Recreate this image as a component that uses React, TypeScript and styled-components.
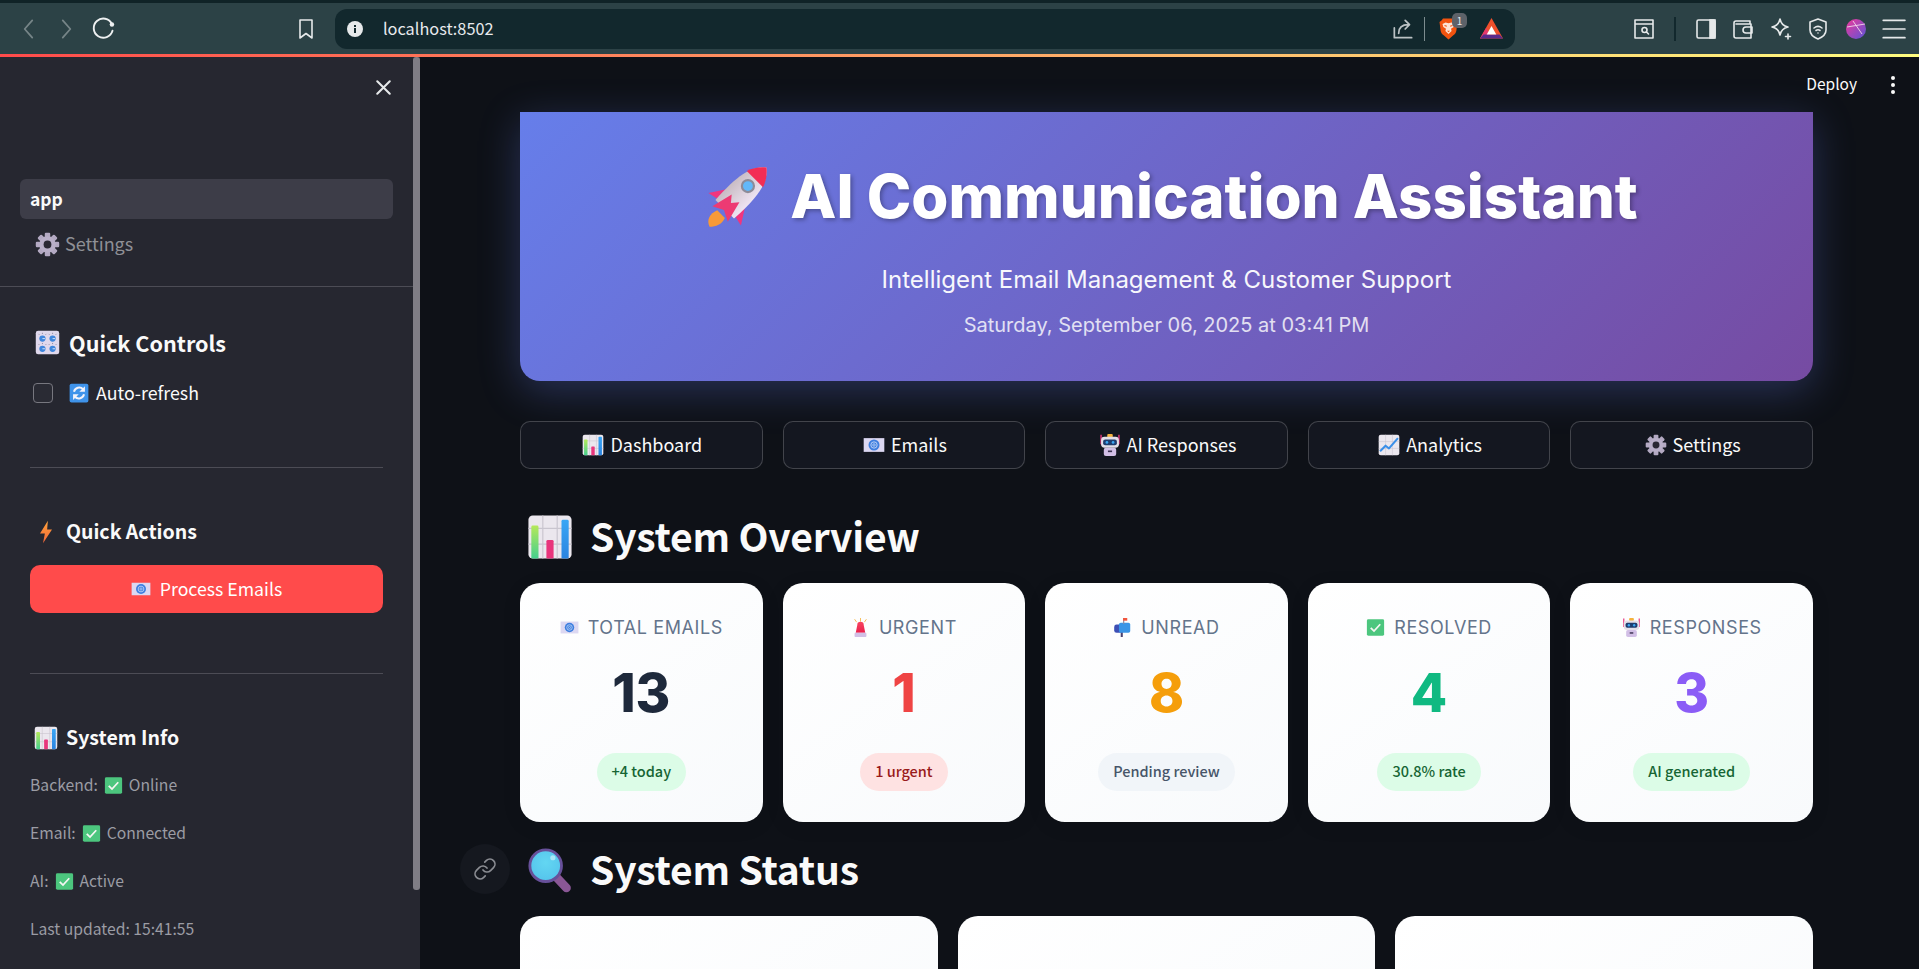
import styled, { createGlobalStyle } from 'styled-components';

const SOURCE = `"Noto Sans CJK SC", "Noto Sans", sans-serif`;
const INTER = `Inter, "Liberation Sans", sans-serif`;

const GlobalStyle = createGlobalStyle`
  html, body {
    margin: 0;
    padding: 0;
    height: 100%;
    overflow: hidden;
    background: #0e1117;
  }
  * { box-sizing: border-box; }
`;

type IconProps = { size?: number };

const ChartEmoji = ({ size = 24 }: IconProps) => (
  <svg width={size} height={size} viewBox="0 0 32 32">
    <defs>
      <linearGradient id="barGreen" x1="0" y1="0" x2="0" y2="1">
        <stop offset="0" stopColor="#b5e85a" />
        <stop offset="1" stopColor="#45cf8e" />
      </linearGradient>
      <linearGradient id="barBlue" x1="0" y1="0" x2="0" y2="1">
        <stop offset="0" stopColor="#3aa6f5" />
        <stop offset="1" stopColor="#2b84e0" />
      </linearGradient>
    </defs>
    <rect x="1" y="1" width="30" height="30" rx="3" fill="#ebe7ee" />
    <path d="M1 10h30M1 21h30M11 1v30M21 1v30" stroke="#c9c5cf" strokeWidth="0.8" />
    <rect x="3" y="8" width="5" height="23" rx="1" fill="url(#barGreen)" />
    <rect x="13.5" y="18" width="5" height="13" rx="1" fill="#e8357c" />
    <rect x="24" y="4" width="5" height="27" rx="1" fill="url(#barBlue)" />
  </svg>
);

const EmailEmoji = ({ size = 24 }: IconProps) => (
  <svg width={size} height={size} viewBox="0 0 32 32">
    <rect x="1" y="6" width="30" height="20" fill="#dcd8f2" />
    <circle cx="16" cy="16" r="8" fill="#3f7fdf" />
    <circle cx="16" cy="16" r="4.6" fill="none" stroke="#c6d8f7" strokeWidth="1.3" />
    <circle cx="16" cy="16" r="1.8" fill="none" stroke="#c6d8f7" strokeWidth="1.1" />
  </svg>
);

const RobotEmoji = ({ size = 24 }: IconProps) => (
  <svg width={size} height={size} viewBox="0 0 32 32">
    <path d="M3 1v14M29 1v14" stroke="#e8357c" strokeWidth="2" />
    <rect x="12" y="0" width="8" height="5" rx="1.5" fill="#f5b23d" />
    <rect x="3" y="4" width="26" height="16" rx="5" fill="#e4dee8" />
    <rect x="6" y="8" width="20" height="8.5" rx="3" fill="#1e3c6e" />
    <circle cx="11.5" cy="12.2" r="2" fill="#3ea6f2" />
    <circle cx="20.5" cy="12.2" r="2" fill="#3ea6f2" />
    <rect x="7" y="20" width="18" height="12" rx="3" fill="#d2bfe6" />
    <rect x="13" y="24" width="6" height="2.4" fill="#3a3050" />
  </svg>
);

const TrendEmoji = ({ size = 24 }: IconProps) => (
  <svg width={size} height={size} viewBox="0 0 32 32">
    <rect x="1" y="1" width="30" height="30" rx="3" fill="#ebe7ee" />
    <path d="M1 11h30M1 21h30M11 1v30M21 1v30" stroke="#c9c5cf" strokeWidth="0.8" />
    <path d="M3 25l8-8 5 4L29 6" fill="none" stroke="#3a8fe8" strokeWidth="3" strokeLinejoin="round" />
  </svg>
);

const GearEmoji = ({ size = 24 }: IconProps) => (
  <svg width={size} height={size} viewBox="0 0 32 32">
    {[0, 45, 90, 135, 180, 225, 270, 315].map((angle) => (
      <rect key={angle} x="12.5" y="1" width="7" height="8" rx="1.5" fill="#b3a9c2" transform={`rotate(${angle} 16 16)`} />
    ))}
    <circle cx="16" cy="16" r="10.5" fill="#b9afc8" />
    <circle cx="16" cy="16" r="5" fill="#2a2833" />
  </svg>
);

const KnobsEmoji = ({ size = 24 }: IconProps) => (
  <svg width={size} height={size} viewBox="0 0 32 32">
    <rect x="1" y="1" width="30" height="30" rx="3" fill="#dfd8ec" />
    {[
      [9.5, 11],
      [22.5, 11],
      [9.5, 24],
      [22.5, 24],
    ].map(([cx, cy]) => (
      <g key={`${cx}-${cy}`}>
        <circle cx={cx} cy={cy} r="4" fill="#3f86dc" />
        <path d={`M${cx} ${cy}h3.2`} stroke="#d9e8fa" strokeWidth="1.2" />
        <path d={`M${cx - 5} ${cy - 6}l1 1M${cx} ${cy - 7.4}v1.4M${cx + 5} ${cy - 6}l-1 1`} stroke="#6f6b88" strokeWidth="0.9" />
      </g>
    ))}
  </svg>
);

const RefreshEmoji = ({ size = 24 }: IconProps) => (
  <svg width={size} height={size} viewBox="0 0 32 32">
    <rect x="1" y="1" width="30" height="30" rx="3" fill="#3f93ea" />
    <path d="M8 14a8.5 8.5 0 0 1 14.5-4" fill="none" stroke="#f2f2fa" strokeWidth="3.2" />
    <path d="M25.5 5v9h-9z" fill="#f2f2fa" />
    <path d="M24 18a8.5 8.5 0 0 1-14.5 4" fill="none" stroke="#f2f2fa" strokeWidth="3.2" />
    <path d="M6.5 27v-9h9z" fill="#f2f2fa" />
  </svg>
);

const BoltEmoji = ({ size = 24 }: IconProps) => (
  <svg width={size} height={size} viewBox="0 0 32 32">
    <defs>
      <linearGradient id="boltFill" x1="0" y1="0" x2="0" y2="1">
        <stop offset="0" stopColor="#ffa43a" />
        <stop offset="1" stopColor="#f2653a" />
      </linearGradient>
    </defs>
    <path d="M18.5 1L8 18h6.5L12 31l12-18.5h-6.5z" fill="url(#boltFill)" />
  </svg>
);

const CheckEmoji = ({ size = 24 }: IconProps) => (
  <svg width={size} height={size} viewBox="0 0 32 32">
    <rect x="1.5" y="2" width="29" height="28" rx="2.5" fill="#4cc67e" />
    <path d="M8 16.5l5.5 5.5L24 10.5" fill="none" stroke="#f4f6f2" strokeWidth="3" />
  </svg>
);

const SirenEmoji = ({ size = 24 }: IconProps) => (
  <svg width={size} height={size} viewBox="0 0 32 32">
    <defs>
      <linearGradient id="sirenFill" x1="0" y1="0" x2="0" y2="1">
        <stop offset="0" stopColor="#f8455f" />
        <stop offset="1" stopColor="#ea1f4c" />
      </linearGradient>
    </defs>
    <path d="M16 0v6M6 2l3.5 5M26 2l-3.5 5" stroke="#f5b23d" strokeWidth="1.4" />
    <path d="M8 25l2.5-13a5.5 5.5 0 0 1 11 0L24 25z" fill="url(#sirenFill)" />
    <rect x="6" y="25" width="20" height="7" rx="1.5" fill="#d2bfe6" />
  </svg>
);

const MailboxEmoji = ({ size = 24 }: IconProps) => (
  <svg width={size} height={size} viewBox="0 0 32 32">
    <rect x="13" y="20" width="3.5" height="12" fill="#4b4270" />
    <rect x="2" y="11" width="14" height="14" rx="4" fill="#3d4fb5" />
    <rect x="10" y="8" width="19" height="17" rx="3" fill="#3a95e6" />
    <rect x="17" y="0" width="2" height="10" fill="#8a8aa0" />
    <rect x="17" y="0" width="7" height="4.5" fill="#f2553d" />
  </svg>
);

const MagnifierEmoji = ({ size = 24 }: IconProps) => (
  <svg width={size} height={size} viewBox="0 0 32 32">
    <defs>
      <radialGradient id="lensFill" cx="0.5" cy="0.4" r="0.6">
        <stop offset="0" stopColor="#63d6f2" />
        <stop offset="1" stopColor="#55c4ec" />
      </radialGradient>
    </defs>
    <path d="M20 20.5L27.5 28.5" stroke="#8a5796" strokeWidth="6" strokeLinecap="round" />
    <circle cx="13" cy="13" r="11" fill="url(#lensFill)" stroke="#67509a" strokeWidth="2" />
    <circle cx="18" cy="7.5" r="1.8" fill="#a9e6f7" />
  </svg>
);

const RocketEmoji = ({ size = 24 }: IconProps) => (
  <svg width={size} height={size} viewBox="0 0 64 64">
    <defs>
      <linearGradient id="rocketBody" x1="0" y1="0" x2="1" y2="0">
        <stop offset="0" stopColor="#c9bcc4" />
        <stop offset="1" stopColor="#eee4f2" />
      </linearGradient>
    </defs>
    <path d="M6 60c-3-6 0-12 7-15l7 7c-3 6-8 8-14 8z" fill="#f79a38" />
    <g transform="rotate(45 34 30)">
      <path d="M22 36l-9 14 9-2zM46 36l9 14-9-2z" fill="#f0357e" />
      <path d="M34 -4c10 8 14 22 12 54H22C20 18 24 4 34 -4z" fill="url(#rocketBody)" />
      <path d="M34 -4c5 4 8.5 9 10.5 15h-21C25.5 5 29 0 34 -4z" fill="#f32d55" />
      <circle cx="34" cy="20" r="6.5" fill="#8d8b98" />
      <circle cx="34" cy="20" r="4.5" fill="#62b8fa" />
      <path d="M29 36l-5 20 10-5 10 5-5-20-5 6z" fill="#ed3a73" />
    </g>
  </svg>
);

const StrokeIcon = ({ size = 24, d, opacity = 1, weight = 1.6 }: IconProps & { d: string; opacity?: number; weight?: number }) => (
  <svg width={size} height={size} viewBox="0 0 24 24" fill="none" stroke="#e6e9ea" strokeWidth={weight} strokeLinecap="round" strokeLinejoin="round" opacity={opacity}>
    <path d={d} />
  </svg>
);

const ReloadIcon = () => (
  <svg width="27" height="27" viewBox="0 0 24 24" fill="none" stroke="#eef0f1" strokeWidth="1.7" strokeLinecap="round">
    <path d="M19.5 8A8.5 8.5 0 1 0 20 14" />
    <circle cx="19.5" cy="8.5" r="2" fill="#eef0f1" stroke="none" />
  </svg>
);

const SidePanelIcon = () => (
  <svg width="24" height="24" viewBox="0 0 24 24" fill="none" stroke="#e6e9ea" strokeWidth="1.6">
    <rect x="3" y="3" width="18" height="18" rx="1.5" />
    <rect x="16" y="3" width="5" height="18" fill="#e6e9ea" />
  </svg>
);

const InfoIcon = () => (
  <svg width="18" height="18" viewBox="0 0 18 18">
    <circle cx="9" cy="9" r="8" fill="#e6e9ea" />
    <rect x="8" y="8" width="2" height="5" fill="#12282d" />
    <rect x="8" y="5" width="2" height="2" fill="#12282d" />
  </svg>
);

const BraveIcon = () => (
  <svg width="19" height="22" viewBox="0 0 19 22">
    <path d="M4 0.5h11l1.500 2 2 1.500-1.200 9c-.3 2-1.500 3.200-3 4.300L9.500 21.500l-4.800-4.200c-1.500-1.100-2.700-2.300-3-4.300L.5 4l2-1.500z" fill="#f1530f" />
    <path d="M3.500 6l3-1.500 3 .8 3-.8 3 1.500-.8 3-2.700 1.800.6 2.200-3.100 3-3.100-3 .6-2.200-2.700-1.800z" fill="#fde3d4" />
    <path d="M5.500 7.500l2.300.8M13.500 7.500l-2.300.8" stroke="#f1530f" strokeWidth="1.200" />
    <path d="M8 12.800h3l-1.500 1.400z" fill="#f1530f" />
  </svg>
);

const BatIcon = () => (
  <svg width="23" height="21" viewBox="0 0 23 21">
    <path d="M11.5 0L23 20.500H0z" fill="#f0502c" />
    <path d="M0 20.500L6 10l5 8.500z" fill="#e5386e" />
    <path d="M0 20.500h23l-3.500-4H3.500z" fill="#5a2a8c" />
    <path d="M11.500 8l4.800 8.500H6.700z" fill="#fff" />
  </svg>
);

const ProfileBall = () => (
  <svg width="22" height="22" viewBox="0 0 22 22">
    <defs>
      <linearGradient id="ballFill" x1="0" y1="0" x2="1" y2="1">
        <stop offset="0" stopColor="#f0389a" />
        <stop offset="1" stopColor="#5a55d8" />
      </linearGradient>
    </defs>
    <circle cx="11" cy="11" r="10" fill="url(#ballFill)" />
    <path d="M2 9l18-3M8 3l9 13" stroke="#f3d7ea" strokeWidth="0.9" fill="none" />
  </svg>
);

const LinkIcon = () => (
  <svg width="24" height="24" viewBox="0 0 24 24" fill="none" stroke="#8a8c92" strokeWidth="1.7" strokeLinecap="round" strokeLinejoin="round">
    <path d="M10 13a5 5 0 0 0 7.54.54l3-3a5 5 0 0 0-7.07-7.07l-1.72 1.71" />
    <path d="M14 11a5 5 0 0 0-7.54-.54l-3 3a5 5 0 0 0 7.07 7.07l1.71-1.71" />
  </svg>
);

const navItems = [
  { label: 'Dashboard', icon: <ChartEmoji size={22} /> },
  { label: 'Emails', icon: <EmailEmoji size={22} /> },
  { label: 'AI Responses', icon: <RobotEmoji size={22} /> },
  { label: 'Analytics', icon: <TrendEmoji size={22} /> },
  { label: 'Settings', icon: <GearEmoji size={22} /> },
];

const stats = [
  { label: 'Total Emails', icon: <EmailEmoji size={19} />, value: '13', color: '#1e293b', chip: '+4 today', tone: 'green' },
  { label: 'Urgent', icon: <SirenEmoji size={19} />, value: '1', color: '#ef4444', chip: '1 urgent', tone: 'red' },
  { label: 'Unread', icon: <MailboxEmoji size={19} />, value: '8', color: '#f59e0b', chip: 'Pending review', tone: 'gray' },
  { label: 'Resolved', icon: <CheckEmoji size={19} />, value: '4', color: '#10b981', chip: '30.8% rate', tone: 'green' },
  { label: 'Responses', icon: <RobotEmoji size={19} />, value: '3', color: '#8b5cf6', chip: 'AI generated', tone: 'green' },
];

const chipTones: Record<string, { bg: string; fg: string }> = {
  green: { bg: '#dcfce7', fg: '#166534' },
  red: { bg: '#fee2e2', fg: '#991b1b' },
  gray: { bg: '#f1f5f9', fg: '#475569' },
};

export default function App() {
  return (
    <Page>
      <GlobalStyle />
      <BrowserBar>
        <ToolButton><StrokeIcon size={26} d="M15 4l-7 8 7 8" opacity={0.4} /></ToolButton>
        <ToolButton><StrokeIcon size={26} d="M9 4l7 8-7 8" opacity={0.4} /></ToolButton>
        <ToolButton><ReloadIcon /></ToolButton>
        <BookmarkSlot><StrokeIcon size={24} d="M6 3h12v18l-6-4.5L6 21z" /></BookmarkSlot>
        <UrlBar>
          <InfoIcon />
          <UrlText>localhost:8502</UrlText>
          <UrlRight>
            <StrokeIcon size={26} d="M4 11v9h16M8 16c0-5 3-8 9-8M14 4l4 4-4 4" opacity={0.8} />
            <ThinSep />
            <BraveSlot>
              <BraveIcon />
              <BraveBadge>1</BraveBadge>
            </BraveSlot>
            <BatIcon />
          </UrlRight>
        </UrlBar>
        <ToolRight>
          <ToolButton><StrokeIcon size={24} d="M3 3h18v18H3zM3 7h18M15 15.5l1.5 1.5M10 13a2.500 2.500 0 1 0 5 0 2.500 2.500 0 1 0-5 0" /></ToolButton>
          <DarkSep />
          <ToolButton><SidePanelIcon /></ToolButton>
          <ToolButton><StrokeIcon size={24} d="M19 7V4H5a2 2 0 0 0-2 2v13a2 2 0 0 0 2 2h15V7H5M21 10h-6a2 2 0 0 0 0 6h6z" /></ToolButton>
          <ToolButton><StrokeIcon size={24} d="M11 2c1 5 3 7 8 8-5 1-7 3-8 8-1-5-3-7-8-8 5-1 7-3 8-8zM19 17v5M16.5 19.5h5" /></ToolButton>
          <ToolButton><StrokeIcon size={24} d="M12 2l8 3v8c0 4-3 7-8 9-5-2-8-5-8-9V5zM8 11c2.5-2 5.5-2 8 0M10 13.5c1.300-1 2.700-1 4 0M12 16h.01" /></ToolButton>
          <ToolButton><ProfileBall /></ToolButton>
          <ToolButton><StrokeIcon size={26} d="M3 4h20M3 12h20M3 20h20" /></ToolButton>
        </ToolRight>
      </BrowserBar>
      <ProgressLine />
      <Body>
        <Sidebar>
          <SidebarScroll />
          <CloseRow><StrokeIcon size={25} weight={2} d="M6 6l12 12M18 6L6 18" /></CloseRow>
          <ActiveNav>app</ActiveNav>
          <SideNavLink>
            <GearEmoji size={25} />
            <Txt>Settings</Txt>
          </SideNavLink>
          <NavDivider />
          <SideSection>
            <ControlsTitle>
              <KnobsEmoji size={25} />
              Quick Controls
            </ControlsTitle>
            <CheckRow>
              <CheckBox />
              <RefreshEmoji size={20} />
              <CheckLabel>Auto-refresh</CheckLabel>
            </CheckRow>
            <SideDivider $top={62} />
            <ActionsTitle>
              <BoltEmoji size={24} />
              <Txt>Quick Actions</Txt>
            </ActionsTitle>
            <PrimaryButton>
              <EmailEmoji size={20} />
              <Txt>Process Emails</Txt>
            </PrimaryButton>
            <SideDivider $top={60} />
            <ActionsTitle>
              <ChartEmoji size={24} />
              <Txt>System Info</Txt>
            </ActionsTitle>
            <InfoList>
              <InfoRow><Txt>Backend:</Txt> <CheckEmoji size={19} /> <Txt>Online</Txt></InfoRow>
              <InfoRow><Txt>Email:</Txt> <CheckEmoji size={19} /> <Txt>Connected</Txt></InfoRow>
              <InfoRow><Txt>AI:</Txt> <CheckEmoji size={19} /> <Txt>Active</Txt></InfoRow>
              <InfoRow><Txt>Last updated: 15:41:55</Txt></InfoRow>
            </InfoList>
          </SideSection>
        </Sidebar>
        <Main>
          <TopBar>
            <DeployText>Deploy</DeployText>
            <Kebab>
              <i />
              <i />
              <i />
            </Kebab>
          </TopBar>
          <Content>
            <Hero>
              <HeroTitle>
                <RocketEmoji size={70} />
                AI Communication Assistant
              </HeroTitle>
              <HeroSub>Intelligent Email Management &amp; Customer Support</HeroSub>
              <HeroDate>Saturday, September 06, 2025 at 03:41 PM</HeroDate>
            </Hero>
            <NavRow>
              {navItems.map((item) => (
                <NavButton key={item.label}>
                  {item.icon}
                  <Txt>{item.label}</Txt>
                </NavButton>
              ))}
            </NavRow>
            <SectionTitle $top={38}>
              <ChartEmoji size={46} />
              <Txt>System Overview</Txt>
            </SectionTitle>
            <StatGrid>
              {stats.map((stat) => (
                <StatCard key={stat.label}>
                  <StatLabel>
                    {stat.icon}
                    {stat.label}
                  </StatLabel>
                  <StatValue $color={stat.color}>{stat.value}</StatValue>
                  <StatChip $tone={stat.tone}>{stat.chip}</StatChip>
                </StatCard>
              ))}
            </StatGrid>
            <SectionTitle $top={18}>
              <AnchorButton><LinkIcon /></AnchorButton>
              <MagnifierEmoji size={46} />
              <Txt>System Status</Txt>
            </SectionTitle>
            <StatusGrid>
              <StatusCard />
              <StatusCard />
              <StatusCard />
            </StatusGrid>
          </Content>
        </Main>
      </Body>
    </Page>
  );
}

const Page = styled.div`
  width: 1919px;
  height: 969px;
  overflow: hidden;
  display: flex;
  flex-direction: column;
  background: #0e1117;
  font-family: ${SOURCE};
`;

/* the font sits a little low in its line box, this lifts it back in flex rows */
const Txt = styled.span`
  margin-bottom: 0.12em;
`;

const BrowserBar = styled.div`
  height: 54px;
  flex: none;
  display: flex;
  align-items: center;
  padding: 0 7px 0 10px;
  background: #2c4246;
  border-top: 3px solid #102327;
`;

const ToolButton = styled.div`
  width: 37.5px;
  height: 38px;
  flex: none;
  display: flex;
  align-items: center;
  justify-content: center;
`;

const BookmarkSlot = styled(ToolButton)`
  margin-left: 165px;
  margin-right: 10px;
`;

const UrlBar = styled.div`
  width: 1180px;
  height: 40px;
  flex: none;
  display: flex;
  align-items: center;
  padding: 0 12px 0 11px;
  border-radius: 12px;
  background: #12282d;
`;

const UrlText = styled.span`
  margin: 0 0 2px 19px;
  color: #e8eaed;
  font-size: 16.3px;
`;

const UrlRight = styled.div`
  margin-left: auto;
  display: flex;
  align-items: center;
`;

const ThinSep = styled.div`
  width: 1px;
  height: 24px;
  margin: 0 14px 0 8px;
  background: #7d8c8f;
`;

const BraveSlot = styled.div`
  position: relative;
  display: flex;
  margin-right: 22px;
`;

const BraveBadge = styled.span`
  position: absolute;
  top: -5px;
  right: -9px;
  width: 15px;
  height: 15px;
  border-radius: 5px;
  background: #5d6269;
  color: #e8eaed;
  font-size: 10px;
  line-height: 15px;
  text-align: center;
`;

const ToolRight = styled.div`
  margin-left: auto;
  display: flex;
  align-items: center;
`;

const DarkSep = styled.div`
  width: 2px;
  height: 24px;
  margin: 0 11px;
  background: #12282d;
`;

const ProgressLine = styled.div`
  height: 3px;
  flex: none;
  background: linear-gradient(90deg, #ff4b4b, #fffd80);
`;

const Body = styled.div`
  flex: 1;
  display: flex;
  min-height: 0;
`;

const Sidebar = styled.aside`
  position: relative;
  width: 420px;
  flex: none;
  background: #262730;
`;

const SidebarScroll = styled.div`
  position: absolute;
  top: 0;
  right: 0;
  width: 7px;
  height: 833px;
  border-radius: 3px;
  background: #7f7d85;
`;

const CloseRow = styled.div`
  height: 60px;
  display: flex;
  align-items: center;
  justify-content: flex-end;
  padding-right: 24px;
`;

const ActiveNav = styled.div`
  height: 40px;
  margin: 62px 27px 0 20px;
  padding-left: 10px;
  border-radius: 6px;
  background: #3d3d48;
  color: #fafafa;
  font-size: 17.5px;
  font-weight: 600;
  line-height: 40px;
`;

const SideNavLink = styled.div`
  height: 40px;
  margin-top: 5px;
  padding-left: 35px;
  display: flex;
  align-items: center;
  gap: 5px;
  color: #8f9096;
  font-size: 18px;
`;

const NavDivider = styled.div`
  width: 413px;
  height: 1px;
  margin-top: 22px;
  background: #4c4c55;
`;

const SideSection = styled.div`
  padding: 0 37px 0 30px;
`;

const ControlsTitle = styled.div`
  height: 36px;
  margin-top: 37px;
  padding-left: 5px;
  display: flex;
  align-items: center;
  gap: 9px;
  color: #fafafa;
  font-size: 21.6px;
  font-weight: 600;
`;

const CheckRow = styled.div`
  height: 24px;
  margin-top: 21px;
  padding-left: 3px;
  display: flex;
  align-items: center;
`;

const CheckBox = styled.div`
  width: 20px;
  height: 20px;
  margin-right: 16px;
  border: 1px solid #77777f;
  border-radius: 4px;
  background: #2a2b34;
`;

const CheckLabel = styled(Txt)`
  margin-left: 7px;
  color: #fafafa;
  font-size: 17.8px;
`;

const SideDivider = styled.div<{ $top: number }>`
  height: 1px;
  margin-top: ${(props) => props.$top}px;
  background: #4c4c55;
`;

const ActionsTitle = styled.div`
  height: 32px;
  margin-top: 48px;
  padding-left: 4px;
  display: flex;
  align-items: center;
  gap: 8px;
  color: #fafafa;
  font-size: 19.5px;
  font-weight: 600;
`;

const PrimaryButton = styled.div`
  height: 48px;
  margin-top: 17px;
  display: flex;
  align-items: center;
  justify-content: center;
  gap: 9px;
  border-radius: 10px;
  background: #ff4b4b;
  color: #fff;
  font-size: 17.7px;
`;

const InfoList = styled.div`
  margin-top: 19px;
  display: flex;
  flex-direction: column;
  gap: 24px;
`;

const InfoRow = styled.div`
  height: 24px;
  display: flex;
  align-items: center;
  gap: 6px;
  color: #9b9ca4;
  font-size: 15.7px;
`;

const Main = styled.main`
  flex: 1;
  min-width: 0;
  display: flex;
  flex-direction: column;
  overflow: hidden;
`;

const TopBar = styled.div`
  height: 55px;
  flex: none;
  display: flex;
  align-items: center;
  justify-content: flex-end;
  padding: 0 24px 0 0;
`;

const DeployText = styled.span`
  margin-bottom: 3px;
  color: #fafafa;
  font-size: 15.5px;
`;

const Kebab = styled.div`
  margin-left: 34px;
  display: flex;
  flex-direction: column;
  gap: 3px;
  i {
    display: block;
    width: 4px;
    height: 4px;
    border-radius: 50%;
    background: #fafafa;
  }
`;

const Content = styled.div`
  padding: 0 106px 0 100px;
`;

const Hero = styled.section`
  height: 269px;
  padding-top: 49px;
  display: flex;
  flex-direction: column;
  align-items: center;
  border-radius: 0 0 20px 20px;
  background: linear-gradient(135deg, #667eea 0%, #764ba2 100%);
  box-shadow: 0 10px 40px rgba(102, 126, 234, 0.3);
  color: #fff;
  font-family: ${INTER};
`;

const HeroTitle = styled.h1`
  height: 70px;
  margin: 0;
  padding-left: 8px;
  display: flex;
  align-items: center;
  gap: 17px;
  font-size: 60px;
  font-weight: 800;
  line-height: 70px;
  text-shadow: 2px 2px 4px rgba(0, 0, 0, 0.3);
`;

const HeroSub = styled.p`
  margin: 34px 0 0;
  font-size: 24px;
  line-height: 30px;
  opacity: 0.95;
`;

const HeroDate = styled.p`
  margin: 17px 0 0;
  font-size: 20px;
  line-height: 26px;
  opacity: 0.8;
`;

const NavRow = styled.div`
  margin-top: 40px;
  display: grid;
  grid-template-columns: repeat(5, 1fr);
  gap: 20px;
`;

const NavButton = styled.div`
  height: 48px;
  padding-left: 2px;
  display: flex;
  align-items: center;
  justify-content: center;
  gap: 6px;
  border: 1px solid rgba(250, 250, 250, 0.2);
  border-radius: 10px;
  background: #141720;
  color: #fafafa;
  font-size: 18px;
`;

const SectionTitle = styled.h2<{ $top: number }>`
  position: relative;
  height: 60px;
  margin: ${(props) => props.$top}px 0 0;
  padding-left: 7px;
  display: flex;
  align-items: center;
  gap: 17px;
  color: #fafafa;
  font-size: 39px;
  font-weight: 600;
  letter-spacing: -0.2px;
`;

const AnchorButton = styled.div`
  position: absolute;
  top: 4px;
  left: -60px;
  width: 50px;
  height: 50px;
  display: flex;
  align-items: center;
  justify-content: center;
  border-radius: 50%;
  background: #15181f;
`;

const StatGrid = styled.div`
  margin-top: 16px;
  display: grid;
  grid-template-columns: repeat(5, 1fr);
  gap: 20px;
`;

const StatCard = styled.div`
  height: 239px;
  padding-top: 32px;
  display: flex;
  flex-direction: column;
  align-items: center;
  border-radius: 20px;
  background: linear-gradient(145deg, #ffffff, #f8fafc);
  box-shadow: 0 4px 20px rgba(0, 0, 0, 0.08);
`;

const StatLabel = styled.div`
  height: 24px;
  display: flex;
  align-items: center;
  gap: 9px;
  color: #64748b;
  font-family: ${INTER};
  font-size: 18px;
  letter-spacing: 0.6px;
  text-transform: uppercase;
`;

const StatValue = styled.div<{ $color: string }>`
  height: 60px;
  margin-top: 24px;
  color: ${(props) => props.$color};
  font-family: ${INTER};
  font-size: 53px;
  font-weight: 800;
  line-height: 60px;
`;

const StatChip = styled.div<{ $tone: string }>`
  height: 38px;
  margin-top: 30px;
  padding: 0 15px;
  border-radius: 20px;
  background: ${(props) => chipTones[props.$tone].bg};
  color: ${(props) => chipTones[props.$tone].fg};
  font-size: 14.5px;
  font-weight: 500;
  line-height: 36px;
`;

const StatusGrid = styled.div`
  margin-top: 16px;
  display: grid;
  grid-template-columns: repeat(3, 1fr);
  gap: 20px;
`;

const StatusCard = styled.div`
  height: 200px;
  border-radius: 20px;
  background: linear-gradient(145deg, #ffffff, #f8fafc);
`;
